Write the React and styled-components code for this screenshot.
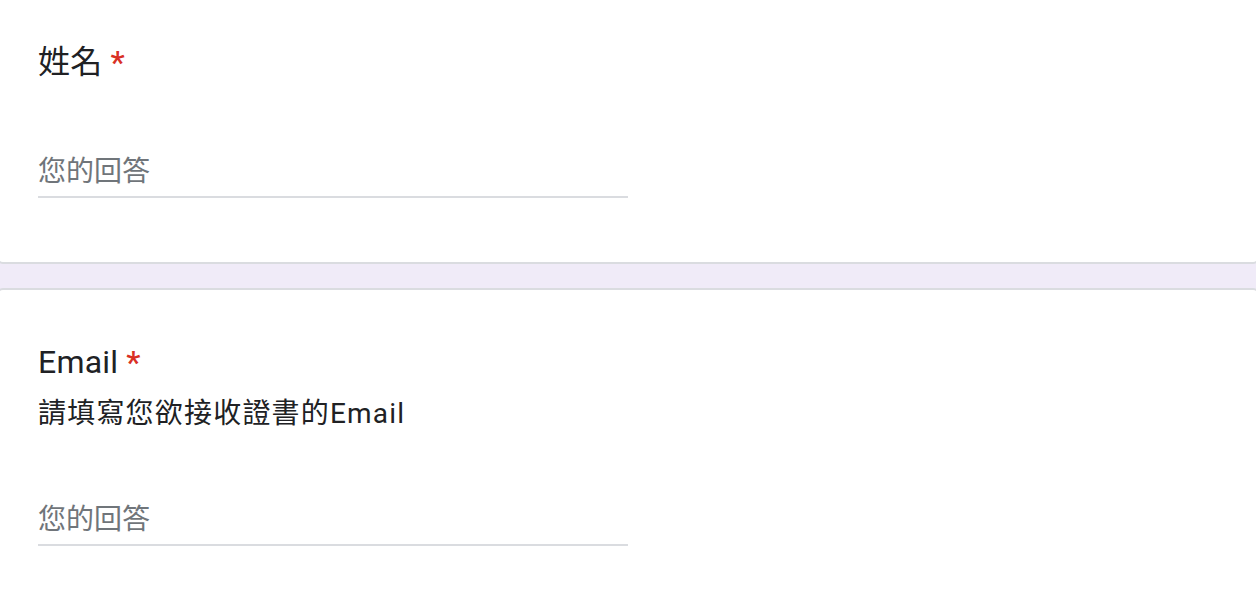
import React from "react"
import styled, { createGlobalStyle } from "styled-components"

const GlobalStyle = createGlobalStyle`
  html, body {
    margin: 0;
    padding: 0;
    background: #f0ebf8;
    overflow: hidden;
  }
  body {
    font-family: Roboto, "Liberation Sans", "Noto Sans CJK TC", sans-serif;
  }
`

const questions = [
  { id: "name", title: "姓名", required: true },
  {
    id: "email",
    title: "Email",
    required: true,
    description: "請填寫您欲接收證書的Email",
  },
]

export default function App() {
  return (
    <>
      <GlobalStyle />
      <Page>
        {questions.map(({ id, title, required, description }) => (
          <Card key={id}>
            <Title>
              {title}
              {required && <Required>*</Required>}
            </Title>
            {description && <Description>{description}</Description>}
            <Answer>您的回答</Answer>
          </Card>
        ))}
      </Page>
    </>
  )
}

const Page = styled.div`
  display: flex;
  flex-direction: column;
  gap: 24px;
  margin: -12px -3px 0;
`

const Card = styled.div`
  background: #fff;
  border: 2px solid #dadce0;
  border-radius: 6px;
  padding: 48px 39px 64px;
`

const Title = styled.div`
  font-size: 32px;
  line-height: 48px;
  color: #202124;
  letter-spacing: 0.2px;
`

const Required = styled.span`
  color: #d93025;
  font-weight: 500;
  margin-left: 8px;
`

const Description = styled.div`
  margin-top: 8px;
  font-size: 28px;
  line-height: 40px;
  letter-spacing: 1.2px;
  color: #202124;
`

const Answer = styled.div`
  width: 590px;
  margin-top: 66px;
  padding-bottom: 4px;
  font-size: 28px;
  line-height: 40px;
  color: #70757a;
  border-bottom: 2px solid #dadce0;
`
